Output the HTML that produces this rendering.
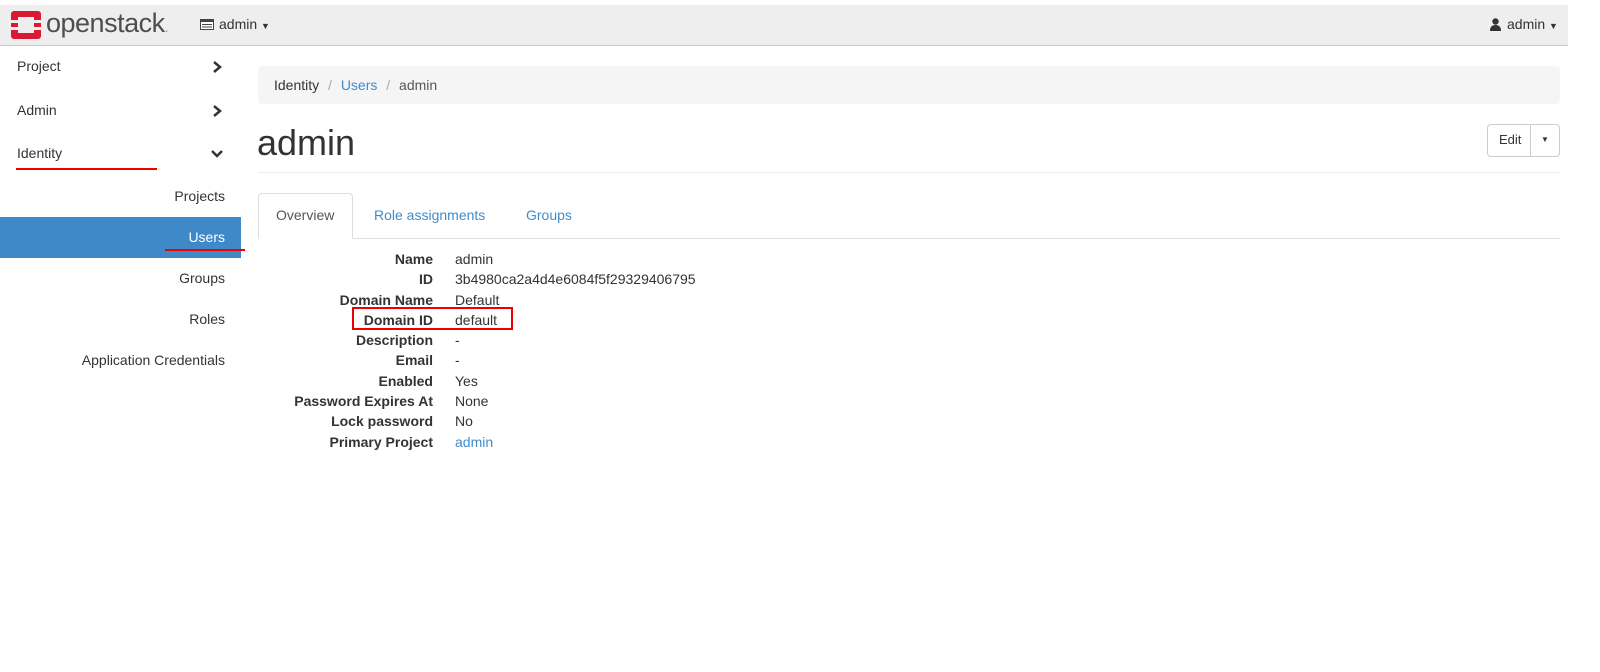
<!DOCTYPE html>
<html><head><style>
*{margin:0;padding:0;box-sizing:border-box}
body{width:1600px;height:672px;background:#fff;font-family:"Liberation Sans",sans-serif;font-size:14px;color:#333;position:relative;overflow:hidden}
.top{position:absolute;left:0;top:5px;width:1568px;height:41px;background:#eee;border-bottom:1px solid #ccc}
.a{position:absolute}
.side div{position:absolute;left:17px;font-size:14px;color:#333}
.lbl{position:absolute;right:1167px;font-weight:bold;color:#333}
.val{position:absolute;left:455px;color:#333}
</style></head><body>
<div class="top"></div>
<svg class="a" style="left:11px;top:11px" width="30" height="28" viewBox="0 0 30 28"><rect x="0" y="0" width="30" height="28" rx="3" fill="#da1a32"/><rect x="7" y="6" width="16" height="16" fill="#eee"/><rect x="0" y="9" width="7" height="3" fill="#eee"/><rect x="0" y="16" width="7" height="3" fill="#eee"/><rect x="23" y="9" width="7" height="3" fill="#eee"/><rect x="23" y="16" width="7" height="3" fill="#eee"/></svg>
<div class="a" style="left:46px;top:8px;font-size:27px;color:#4e4e4e;letter-spacing:-0.5px">openstack<span style="font-size:14px;color:#999">.</span></div>
<svg class="a" style="left:200px;top:19px" width="14" height="11"><rect x="0.5" y="0.5" width="13" height="10" fill="#fff" stroke="#444"/><rect x="0.5" y="0.5" width="13" height="2.5" fill="#444"/><line x1="2" y1="5.5" x2="12" y2="5.5" stroke="#444"/><line x1="2" y1="8" x2="12" y2="8" stroke="#444"/></svg>
<div class="a" style="left:219px;top:16px;color:#333">admin <span style="font-size:9px">▼</span></div>
<svg class="a" style="left:1490px;top:18px" width="11" height="13"><circle cx="5.5" cy="3.5" r="3.2" fill="#333"/><path d="M0 13 Q0 7 5.5 7 Q11 7 11 13Z" fill="#333"/></svg>
<div class="a" style="left:1507px;top:16px;color:#333">admin <span style="font-size:9px">▼</span></div>

<div class="side">
<div style="top:58px">Project</div>
<div style="top:102px">Admin</div>
<div style="top:145px">Identity</div>
</div>
<svg class="a" style="left:211px;top:60px" width="12" height="14"><path d="M3 2 L9 7 L3 12" stroke="#333" stroke-width="2.5" fill="none"/></svg>
<svg class="a" style="left:211px;top:104px" width="12" height="14"><path d="M3 2 L9 7 L3 12" stroke="#333" stroke-width="2.5" fill="none"/></svg>
<svg class="a" style="left:210px;top:148px" width="14" height="12"><path d="M2 3 L7 8 L12 3" stroke="#333" stroke-width="2.5" fill="none"/></svg>
<div class="a" style="left:16px;top:168px;width:141px;height:2px;background:#e00"></div>
<div class="a" style="left:0;top:217px;width:241px;height:41px;background:#3f89c8"></div>
<div class="a" style="right:1375px;top:188px;color:#333">Projects</div>
<div class="a" style="right:1375px;top:229px;color:#fff">Users</div>
<div class="a" style="left:165px;top:249px;width:80px;height:2px;background:#e00"></div>
<div class="a" style="right:1375px;top:270px;color:#333">Groups</div>
<div class="a" style="right:1375px;top:311px;color:#333">Roles</div>
<div class="a" style="right:1375px;top:352px;color:#333">Application Credentials</div>

<div class="a" style="left:258px;top:66px;width:1302px;height:38px;background:#f5f5f5;border-radius:4px"></div>
<div class="a" style="left:274px;top:77px;color:#333">Identity <span style="color:#aaa;padding:0 5px">/</span> <span style="color:#428bca">Users</span> <span style="color:#aaa;padding:0 5px">/</span> <span style="color:#555">admin</span></div>
<div class="a" style="left:257px;top:122px;font-size:36px;color:#333">admin</div>
<div class="a" style="left:1487px;top:124px;width:73px;height:33px;border:1px solid #ccc;border-radius:4px;background:#fff"></div>
<div class="a" style="left:1530px;top:124px;width:1px;height:33px;background:#ccc"></div>
<div class="a" style="left:1499px;top:132px;font-size:13px">Edit</div>
<div class="a" style="left:1541px;top:135px;font-size:8px">▼</div>
<div class="a" style="left:258px;top:172px;width:1302px;height:1px;background:#eee"></div>

<div class="a" style="left:258px;top:238px;width:1302px;height:1px;background:#ddd"></div>
<div class="a" style="left:258px;top:193px;width:95px;height:46px;background:#fff;border:1px solid #ddd;border-bottom:none;border-radius:4px 4px 0 0"></div>
<div class="a" style="left:276px;top:207px;color:#555">Overview</div>
<div class="a" style="left:374px;top:207px;color:#428bca">Role assignments</div>
<div class="a" style="left:526px;top:207px;color:#428bca">Groups</div>

<div class="lbl" style="top:251px">Name</div><div class="val" style="top:251px">admin</div>
<div class="lbl" style="top:271px">ID</div><div class="val" style="top:271px">3b4980ca2a4d4e6084f5f29329406795</div>
<div class="lbl" style="top:292px">Domain Name</div><div class="val" style="top:292px">Default</div>
<div class="lbl" style="top:312px">Domain ID</div><div class="val" style="top:312px">default</div>
<div class="lbl" style="top:332px">Description</div><div class="val" style="top:332px">-</div>
<div class="lbl" style="top:352px">Email</div><div class="val" style="top:352px">-</div>
<div class="lbl" style="top:373px">Enabled</div><div class="val" style="top:373px">Yes</div>
<div class="lbl" style="top:393px">Password Expires At</div><div class="val" style="top:393px">None</div>
<div class="lbl" style="top:413px">Lock password</div><div class="val" style="top:413px">No</div>
<div class="lbl" style="top:434px">Primary Project</div><div class="val" style="top:434px;color:#428bca">admin</div>
<div class="a" style="left:352px;top:307px;width:161px;height:23px;border:2px solid #e00"></div>
</body></html>
